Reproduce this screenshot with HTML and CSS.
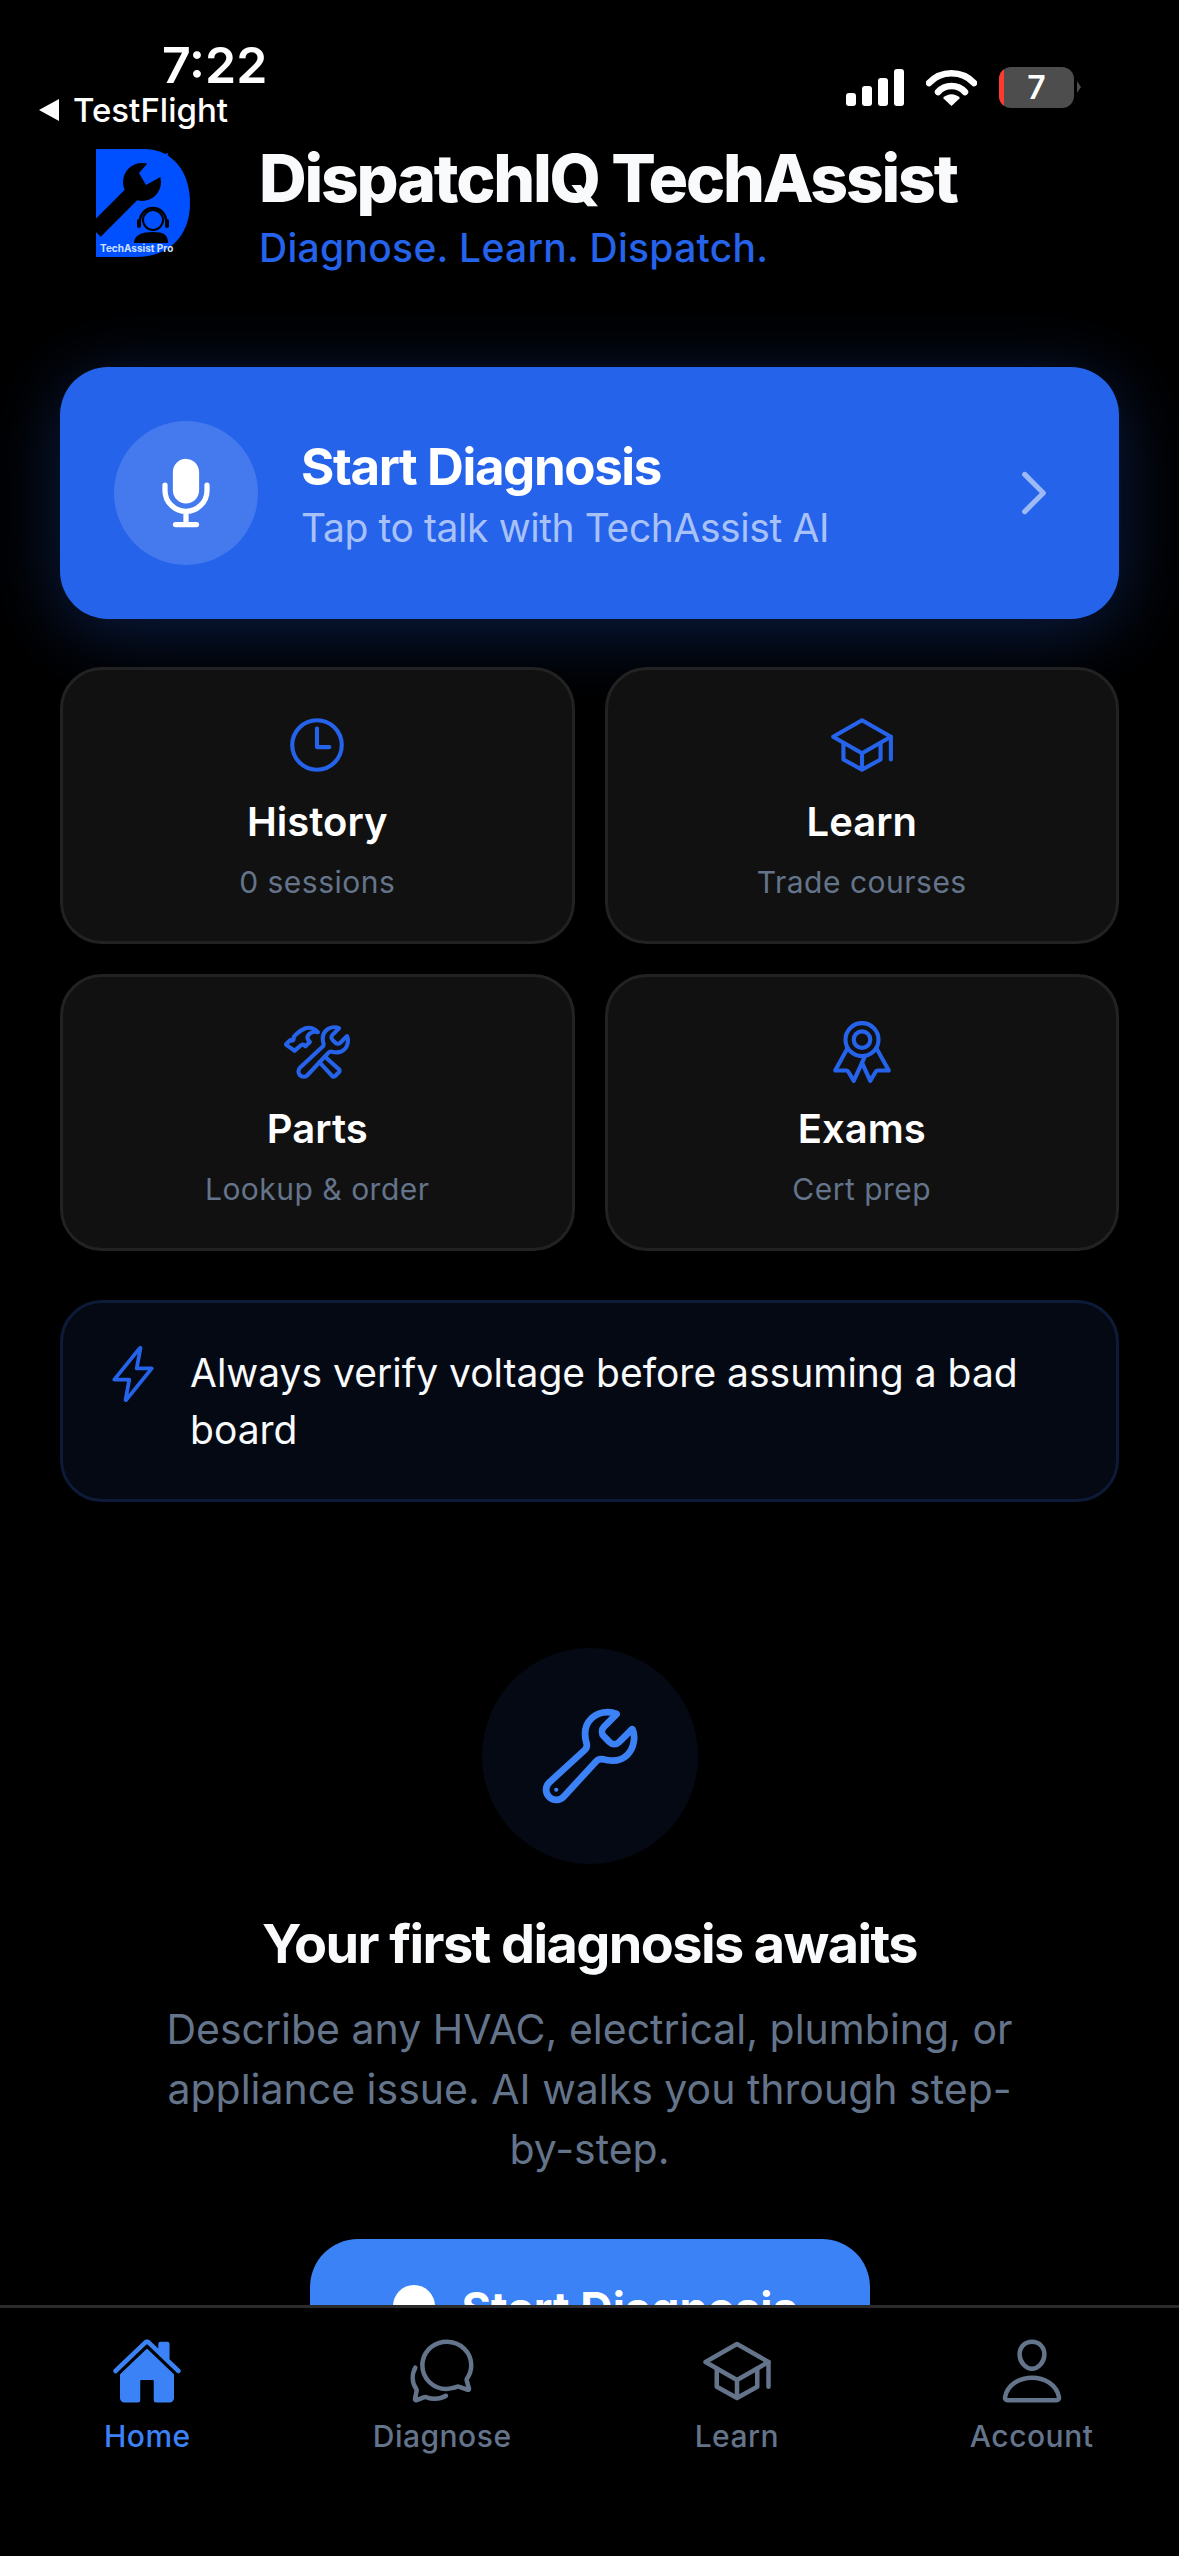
FILE: index.html
```html
<!DOCTYPE html>
<html lang="en">
<head>
    <meta charset="UTF-8">
    <meta name="viewport" content="width=device-width, initial-scale=1.0">
    <title>DispatchIQ TechAssist</title>
    <link rel="stylesheet" href="styles.css">
</head>
<body>
<div class="screen">

    <!-- Status bar -->
    <div class="status-bar">
        <div class="status-left">
            <div class="time">7:22</div>
            <div class="back-link"><span class="back-arrow"></span>TestFlight</div>
        </div>
        <div class="status-right">
            <div class="signal">
                <span class="bar bar-1"></span>
                <span class="bar bar-2"></span>
                <span class="bar bar-3"></span>
                <span class="bar bar-4"></span>
            </div>
            <svg class="wifi" viewBox="0 0 51 37">
                <path d="M3 14 C15 1 36 1 48 14" fill="none" stroke="#fff" stroke-width="6.5" stroke-linecap="round"/>
                <path d="M12 23 C19 15 32 15 39 23" fill="none" stroke="#fff" stroke-width="6.5" stroke-linecap="round"/>
                <path d="M17 29 C22 24 29 24 34 29 L25.500 37z" fill="#fff"/>
            </svg>
            <div class="battery"><span class="battery-low"></span><span class="battery-num">7</span></div>
            <span class="battery-cap"></span>
        </div>
    </div>

    <div class="content">
        <!-- Header -->
        <div class="header">
            <svg class="logo" viewBox="0 0 94 108">
                <path d="M0 0H48C76 0 94 22 94 54C94 86 74 108 40 108H0z" fill="#0050ff"/>
                <path d="M-1 82L38 43" stroke="#000" stroke-width="16" fill="none"/>
                <circle cx="46" cy="33" r="19" fill="#000"/>
                <path d="M57 8L43 24L50 36L68 26L72 4z" fill="#0050ff"/>
                <path d="M44 72a13 13 0 1 1 26 0" fill="none" stroke="#000" stroke-width="2.500"/>
                <circle cx="57" cy="71" r="10" fill="none" stroke="#000" stroke-width="2"/>
                <rect x="41" y="70" width="4" height="9" rx="2" fill="#000"/>
                <rect x="69" y="70" width="4" height="9" rx="2" fill="#000"/>
                <path d="M38 94C38 86 46 83 57 83C68 83 72 86 72 94z" fill="#000"/>
                <text class="logo-text" x="4" y="103">TechAssist Pro</text>
            </svg>
            <div class="header-text">
                <h1 class="app-title">DispatchIQ TechAssist</h1>
                <div class="app-tagline">Diagnose. Learn. Dispatch.</div>
            </div>
        </div>

        <!-- Main action -->
        <div class="hero">
            <div class="hero-icon">
                <svg class="icon-mic" viewBox="0 0 512 512">
                    <path d="M192 448h128M384 208v32c0 70.400-57.600 128-128 128h0c-70.400 0-128-57.600-128-128v-32M256 368v80" fill="none" stroke="#fff" stroke-width="32" stroke-linecap="round" stroke-linejoin="round"/>
                    <path d="M256 320a78.830 78.830 0 01-56.550-24.100A80.890 80.890 0 01176 239V128a79.690 79.690 0 0180-80c44.860 0 80 35.140 80 80v111c0 44.660-35.890 81-80 81z" fill="#fff"/>
                </svg>
            </div>
            <div class="hero-text">
                <div class="hero-title">Start Diagnosis</div>
                <div class="hero-sub">Tap to talk with TechAssist AI</div>
            </div>
            <svg class="icon-chevron" viewBox="0 0 512 512">
                <path d="M184 112l144 144-144 144" fill="none" stroke="#9db9f6" stroke-width="40" stroke-linecap="round" stroke-linejoin="round"/>
            </svg>
        </div>

        <!-- Quick links -->
        <div class="tiles">
            <div class="tile">
                <svg class="tile-icon" viewBox="0 0 512 512">
                    <path d="M256 64C150 64 64 150 64 256s86 192 192 192 192-86 192-192S362 64 256 64z"/>
                    <path d="M256 128v144h96"/>
                </svg>
                <div class="tile-title">History</div>
                <div class="tile-sub">0 sessions</div>
            </div>
            <div class="tile">
                <svg class="tile-icon" viewBox="0 0 512 512">
                    <path d="M32 192L256 64l224 128-224 128L32 192z"/>
                    <path d="M112 240v128l144 80 144-80V240M480 368V192M256 320v128"/>
                </svg>
                <div class="tile-title">Learn</div>
                <div class="tile-sub">Trade courses</div>
            </div>
            <div class="tile">
                <svg class="tile-icon" viewBox="0 0 512 512">
                    <path d="M436.670 184.110a27.170 27.170 0 01-38.300 0l-22.480-22.490a27.150 27.150 0 010-38.290l50.890-50.890a.85.85 0 00-.26-1.380C393.680 57 351.090 64.150 324.050 91c-25.880 25.690-27.350 64.270-17.870 98a27.170 27.170 0 01-7.670 27.140l-173 160.760a40.760 40.760 0 1057.570 57.540l162.150-173.300a27.170 27.170 0 0126.770-7.700c33.460 8.940 71.490 7.260 97.070-17.940 27.490-27.080 33.420-74.940 20.100-102.330a.85.85 0 00-1.360-.22z"/>
                    <path d="M317.070 291.300c40.950 38.100 90.620 83.270 110 99.410a13.460 13.460 0 01.94 19.920L394.630 444a14 14 0 01-20.290-.76c-16.530-19.180-61.090-67.110-99.270-107"/>
                    <path d="M17.340 193.500l29.410-28.740a4.710 4.710 0 016.820 0 9.860 9.860 0 008.190 2.770c3.830-.42 7.920-1.600 10.570-4.120 6-5.800-.94-17.230 4.340-24.540 6-8.500 12-15.500 19.780-22.600 22-21 45-35 69.900-44.450 20-6 40-6 60 3 12 5 25 14 36 27-20-5-42-2-58 8-14 9-24 24-22 40 1 10 8 18 18 28l-34 34c-8-8-14-13-21-13-6 0-12 3-18 8-4 3-6 8-11 10l-31 27a4.830 4.830 0 01-6.810 0L17.340 200.290a4.800 4.800 0 010-6.790z"/>
                </svg>
                <div class="tile-title">Parts</div>
                <div class="tile-sub">Lookup &amp; order</div>
            </div>
            <div class="tile">
                <svg class="tile-icon" viewBox="0 0 512 512">
                    <circle cx="256" cy="160" r="128"/>
                    <path d="M143.650 227.820L48 400l86.860-.42a16 16 0 0113.820 7.800L192 480l88.330-194.320"/>
                    <path d="M366.540 224L464 400l-86.860-.42a16 16 0 00-13.820 7.800L320 480l-64-140.800"/>
                    <circle cx="256" cy="160" r="64"/>
                </svg>
                <div class="tile-title">Exams</div>
                <div class="tile-sub">Cert prep</div>
            </div>
        </div>

        <!-- Tip -->
        <div class="tip">
            <svg class="tip-icon" viewBox="0 0 512 512">
                <path d="M315.270 33L96 304h128l-31.510 173.230a2.360 2.360 0 002.330 2.770h0a2.360 2.360 0 001.890-.95L416 208H288l31.660-173.250a2.450 2.450 0 00-2.440-2.750h0a2.420 2.420 0 00-1.950 1z"/>
            </svg>
            <div class="tip-text">Always verify voltage before assuming a bad board</div>
        </div>

        <!-- Empty state -->
        <div class="empty">
            <div class="empty-circle">
                <svg class="empty-icon" viewBox="0 0 512 512">
                    <path d="M393.870 190a32.100 32.100 0 01-45.250 0l-26.570-26.570a32.090 32.090 0 010-45.260L382.190 58a1 1 0 00-.3-1.640c-38.820-16.640-89.150-8.160-121.110 23.570-30.770 30.540-32.520 76.540-21.270 116.170a31.930 31.930 0 01-9.060 32.080L64 380a48.170 48.170 0 1068 68l153.860-167a31.930 31.930 0 0131.600-9.130c39.540 10.590 85 8.770 115.460-21.420 32.780-32.460 39.980-89.190 24.180-121.700a1 1 0 00-1.610-.26z"/>
                    <circle class="empty-hole" cx="96" cy="416" r="10"/>
                </svg>
            </div>
            <h2 class="empty-title">Your first diagnosis awaits</h2>
            <p class="empty-text">Describe any HVAC, electrical, plumbing, or appliance issue. AI walks you through step-by-step.</p>
            <div class="empty-button"><span class="button-dot"></span>Start Diagnosis</div>
        </div>
    </div>

    <!-- Tab bar -->
    <div class="tabbar">
        <div class="tab tab-active">
            <svg class="tab-icon tab-icon-solid" viewBox="0 0 512 512">
                <path d="M261.560 101.280a8 8 0 00-11.060 0L66.400 277.150a8 8 0 00-2.470 5.790L63.900 448a32 32 0 0032 32H192a16 16 0 0016-16V328a8 8 0 018-8h80a8 8 0 018 8v136a16 16 0 0016 16h96.060a32 32 0 0032-32V282.940a8 8 0 00-2.470-5.790z"/>
                <path d="M490.910 244.150l-74.800-71.560V64a16 16 0 00-16-16h-48a16 16 0 00-16 16v32l-57.920-55.380C272.770 35.140 264.710 32 256 32c-8.680 0-16.720 3.140-22.140 8.630l-212.700 203.500c-6.220 6-7 15.870-1.340 22.370A16 16 0 0043 267.560L250.500 69.280a8 8 0 0111.060 0l207.520 198.280a16 16 0 0022.590-.44c6.140-6.360 5.630-16.860-.76-22.970z"/>
            </svg>
            <div class="tab-label">Home</div>
        </div>
        <div class="tab">
            <svg class="tab-icon" viewBox="0 0 512 512">
                <path d="M431 320.600c-1-3.600 1.200-8.600 3.300-12.200a33.680 33.680 0 012.100-3.100A162 162 0 00464 215c.3-92.200-77.500-167-173.700-167-83.900 0-153.900 57.100-170.300 132.900a160.700 160.700 0 00-3.700 34.200c0 92.300 74.800 169.100 171 169.100 15.300 0 35.900-4.600 47.200-7.700s22.500-7.200 25.400-8.300a26.440 26.440 0 019.300-1.700 26 26 0 0110.100 2l56.700 20.100a13.520 13.520 0 003.900 1 8 8 0 008-8 12.850 12.850 0 00-.5-2.700z"/>
                <path d="M66.460 232a146.230 146.230 0 006.390 152.670c2.310 3.490 3.610 6.190 3.210 8s-11.930 61.870-11.930 61.870a8 8 0 002.710 7.680A8.170 8.170 0 0072 464a7.260 7.260 0 002.910-.6l56.210-22a15.700 15.700 0 0112 .2c18.940 7.380 39.880 12 60.830 12A159.210 159.210 0 00284 432.110"/>
            </svg>
            <div class="tab-label">Diagnose</div>
        </div>
        <div class="tab">
            <svg class="tab-icon" viewBox="0 0 512 512">
                <path d="M32 192L256 64l224 128-224 128L32 192z"/>
                <path d="M112 240v128l144 80 144-80V240M480 368V192M256 320v128"/>
            </svg>
            <div class="tab-label">Learn</div>
        </div>
        <div class="tab">
            <svg class="tab-icon" viewBox="0 0 512 512">
                <path d="M344 144c-3.920 52.870-44 96-88 96s-84.150-43.120-88-96c-4-55 35-96 88-96s92 42 88 96z"/>
                <path d="M256 304c-87 0-175.300 48-191.640 138.600C62.390 453.520 68.570 464 80 464h352c11.440 0 17.620-10.480 15.650-21.400C431.300 352 343 304 256 304z"/>
            </svg>
            <div class="tab-label">Account</div>
        </div>
    </div>

</div>
</body>
</html>
```

FILE: styles.css
```css
* {
    box-sizing: border-box;
}
body {
    margin: 0;
    background-color: #000;
    font-family: Inter, "Liberation Sans", sans-serif;
    color: #fff;
}
.screen {
    width: 1179px;
    height: 2556px;
    display: flex;
    flex-direction: column;
    overflow: hidden;
    background-color: #000;
}

/* status bar */
.status-bar {
    height: 139px;
    flex-shrink: 0;
    display: flex;
    justify-content: space-between;
    padding: 40px 98px 0 39px;
}
.time {
    margin-left: 123px;
    font-size: 50px;
    line-height: 50px;
    font-weight: 600;
}
.back-link {
    display: flex;
    align-items: center;
    gap: 14px;
    font-size: 33px;
    line-height: 40px;
    font-weight: 500;
}
.back-arrow {
    width: 0;
    height: 0;
    border-top: 11px solid transparent;
    border-bottom: 11px solid transparent;
    border-right: 20px solid #fff;
}
.status-right {
    display: flex;
    align-items: flex-start;
    padding-top: 27px;
}
.signal {
    display: flex;
    align-items: flex-end;
    gap: 6px;
    height: 37px;
    margin-top: 2px;
}
.bar {
    width: 10px;
    background: #fff;
    border-radius: 3px;
}
.bar-1 { height: 13px; }
.bar-2 { height: 20px; }
.bar-3 { height: 28px; }
.bar-4 { height: 37px; }
.wifi {
    width: 51px;
    height: 37px;
    margin: 2px 22px 0 22px;
}
.battery {
    width: 75px;
    height: 41px;
    border-radius: 12px;
    background: #4d4d4d;
    display: flex;
    overflow: hidden;
}
.battery-low {
    width: 5px;
    background: #ff3b30;
}
.battery-num {
    flex: 1;
    text-align: center;
    font-size: 32px;
    line-height: 41px;
    font-weight: 600;
    padding-right: 5px;
}
.battery-cap {
    width: 0;
    height: 0;
    margin: 14px 0 0 3px;
    border-top: 6px solid transparent;
    border-bottom: 6px solid transparent;
    border-left: 4px solid #4d4d4d;
}

/* scrolling content */
.content {
    flex: 1;
    min-height: 0;
    overflow: hidden;
    padding: 0 60px;
}
.header {
    display: flex;
    align-items: flex-start;
    gap: 69px;
    padding-left: 36px;
    height: 134px;
}
.logo {
    width: 94px;
    height: 108px;
    margin-top: 10px;
    flex-shrink: 0;
    overflow: visible;
}
.logo-text {
    font-size: 10px;
    font-weight: 700;
    fill: #cfe0ff;
}
.app-title {
    margin: 0;
    font-size: 66px;
    line-height: 78px;
    font-weight: 800;
    letter-spacing: -2.2px;
    color: #f8fafc;
}
.app-tagline {
    margin-top: 6px;
    font-size: 39px;
    line-height: 50px;
    font-weight: 500;
    letter-spacing: 0.3px;
    color: #2563eb;
}

/* main action card */
.hero {
    margin-top: 94px;
    height: 252px;
    border-radius: 48px;
    background-color: #2563eb;
    box-shadow: 0 12px 72px rgba(37, 99, 235, 0.3);
    display: flex;
    align-items: center;
    padding: 0 52px 0 54px;
}
.hero-icon {
    width: 144px;
    height: 144px;
    border-radius: 50%;
    background-color: rgba(255, 255, 255, 0.15);
    display: flex;
    align-items: center;
    justify-content: center;
    flex-shrink: 0;
}
.icon-mic {
    width: 84px;
    height: 84px;
}
.hero-text {
    flex: 1;
    margin-left: 43px;
}
.hero-title {
    font-size: 51px;
    line-height: 68px;
    font-weight: 700;
    letter-spacing: -1.4px;
}
.hero-sub {
    margin-top: 2px;
    font-size: 39px;
    line-height: 50px;
    letter-spacing: -0.4px;
    color: #a8c1f7;
}
.icon-chevron {
    width: 66px;
    height: 66px;
    flex-shrink: 0;
}

/* tiles */
.tiles {
    margin-top: 48px;
    display: grid;
    grid-template-columns: 1fr 1fr;
    gap: 30px;
}
.tile {
    height: 277px;
    border: 3px solid #222;
    border-radius: 42px;
    background-color: #111;
    padding-top: 42px;
    display: flex;
    flex-direction: column;
    align-items: center;
}
.tile-icon {
    width: 66px;
    height: 66px;
    flex-shrink: 0;
    fill: none;
    stroke: #2563eb;
    stroke-width: 32;
    stroke-linecap: round;
    stroke-linejoin: round;
}
.tile-title {
    margin-top: 17px;
    font-size: 40px;
    line-height: 54px;
    font-weight: 600;
}
.tile-sub {
    margin-top: 12px;
    font-size: 30px;
    line-height: 42px;
    letter-spacing: 0.5px;
    color: #64748b;
}

/* tip box */
.tip {
    margin-top: 49px;
    border: 3px solid #0d1a38;
    border-radius: 42px;
    background-color: #050914;
    padding: 41px 40px;
    display: flex;
    gap: 27px;
}
.tip-icon {
    width: 60px;
    height: 60px;
    flex-shrink: 0;
    fill: none;
    stroke: #2563eb;
    stroke-width: 32;
    stroke-linecap: round;
    stroke-linejoin: round;
}
.tip-text {
    font-size: 39px;
    line-height: 57px;
    color: #f8fafc;
}

/* empty state */
.empty {
    margin-top: 146px;
    display: flex;
    flex-direction: column;
    align-items: center;
}
.empty-circle {
    width: 216px;
    height: 216px;
    border-radius: 50%;
    background-color: #050914;
    display: flex;
    align-items: center;
    justify-content: center;
}
.empty-icon {
    width: 108px;
    height: 108px;
    fill: none;
    stroke: #3b82f6;
    stroke-width: 32;
    stroke-linecap: round;
    stroke-linejoin: round;
}
.empty-hole {
    fill: #3b82f6;
    stroke: none;
}
.empty-title {
    margin: 47px 0 0;
    font-size: 54px;
    line-height: 66px;
    font-weight: 700;
    letter-spacing: -1.6px;
    color: #f8fafc;
}
.empty-text {
    margin: 22px 0 0;
    width: 900px;
    text-align: center;
    font-size: 41px;
    line-height: 60px;
    color: #64748b;
}
.empty-button {
    margin-top: 60px;
    width: 560px;
    height: 150px;
    flex-shrink: 0;
    border-radius: 48px;
    background-color: #3b82f6;
    display: flex;
    align-items: flex-start;
    padding: 41px 0 0 83px;
    font-size: 45px;
    line-height: 58px;
    font-weight: 700;
}
.button-dot {
    width: 42px;
    height: 42px;
    border-radius: 50%;
    background: #fff;
    margin: 5px 27px 0 0;
}

/* tab bar */
.tabbar {
    height: 251px;
    flex-shrink: 0;
    border-top: 3px solid #2a2a2a;
    background-color: #000;
    display: grid;
    grid-template-columns: repeat(4, 1fr);
    padding-top: 27px;
}
.tab {
    display: flex;
    flex-direction: column;
    align-items: center;
    color: #64748b;
}
.tab-icon {
    width: 72px;
    height: 72px;
    fill: none;
    stroke: #64748b;
    stroke-width: 32;
    stroke-linecap: round;
    stroke-linejoin: round;
}
.tab-icon-solid {
    fill: #3b82f6;
    stroke: none;
}
.tab-active {
    color: #3b82f6;
}
.tab-label {
    margin-top: 9px;
    font-size: 30px;
    line-height: 40px;
    font-weight: 500;
    letter-spacing: 0.5px;
}
```
